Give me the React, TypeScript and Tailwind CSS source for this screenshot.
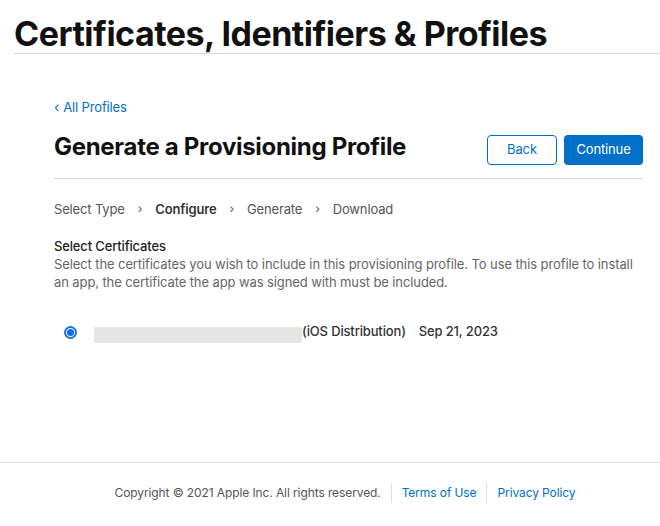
import React from "react";

export default function App() {
  const font = { fontFamily: "Inter, 'Noto Sans', sans-serif" };
  return (
    <div className="w-[660px] h-[526px] bg-white flex flex-col overflow-hidden" style={font}>
      <header className="pl-[14px] pt-[15px]">
        <div className="text-[34px] leading-[38px] font-bold text-[#111] tracking-[-0.5px]">
          Certificates, Identifiers &amp; Profiles
        </div>
        <div className="h-px bg-[#d6d6d6]" />
      </header>

      <main className="flex-1 px-[54px] pr-[17px] pt-[45px] tracking-[-0.15px]">
        <a className="text-[13px] leading-[16px] text-[#0070c9] flex items-center gap-[4px]">
          <span className="text-[14px]">‹</span>
          <span>All Profiles</span>
        </a>
        <div className="flex items-center justify-between mt-[14px]">
          <h1 className="text-[24px] leading-[30px] font-bold text-[#111] tracking-[-0.3px]">
            Generate a Provisioning Profile
          </h1>
          <div className="flex gap-[7px] mt-[6px]">
            <button className="w-[70px] h-[30px] rounded-[4px] border border-[#0070c9] text-[#0070c9] text-[13px] bg-white">
              Back
            </button>
            <button className="w-[79px] h-[30px] rounded-[4px] bg-[#0070c9] text-white text-[13px]">
              Continue
            </button>
          </div>
        </div>
        <div className="h-px bg-[#d6d6d6] mt-[13px]" />

        <div className="flex items-center text-[13px] text-[#555] mt-[22px] leading-[16px]">
          <span>Select Type</span>
          <span className="mx-[13px] text-[12px]">›</span>
          <span className="font-semibold text-[#333]">Configure</span>
          <span className="mx-[13px] text-[12px]">›</span>
          <span>Generate</span>
          <span className="mx-[13px] text-[12px]">›</span>
          <span>Download</span>
        </div>

        <div className="mt-[20px] text-[13px] leading-[18px]">
          <div className="text-[#222] font-medium">Select Certificates</div>
          <div className="text-[#666] tracking-[-0.1px]">
            Select the certificates you wish to include in this provisioning profile. To use this profile to install an app, the certificate the app was signed with must be included.
          </div>
        </div>

        <div className="flex items-center mt-[30px] text-[13px] text-[#333] font-medium">
          <div className="ml-[10px] w-[13px] h-[13px] rounded-full border-[2px] border-[#1a73e8] flex items-center justify-center">
            <div className="w-[7px] h-[7px] rounded-full bg-[#0a6cf5]" />
          </div>
          <div className="ml-[17px] w-[208px] h-[16px] bg-[#e6e6e6] mt-[6px]" />
          <span>(iOS Distribution)</span>
          <span className="ml-[13px]">Sep 21, 2023</span>
        </div>
      </main>

      <footer className="border-t border-[#e0e0e0] h-[64px] flex items-center justify-center text-[12px] pb-[3px] tracking-[-0.1px]">
        <div className="flex items-center ml-[30px]">
          <span className="text-[#555]">Copyright © 2021 Apple Inc. All rights reserved.</span>
          <span className="w-px h-[20px] bg-[#ddd] mx-[10px]" />
          <a className="text-[#0070c9]">Terms of Use</a>
          <span className="w-px h-[20px] bg-[#ddd] mx-[10px]" />
          <a className="text-[#0070c9]">Privacy Policy</a>
        </div>
      </footer>
    </div>
  );
}
